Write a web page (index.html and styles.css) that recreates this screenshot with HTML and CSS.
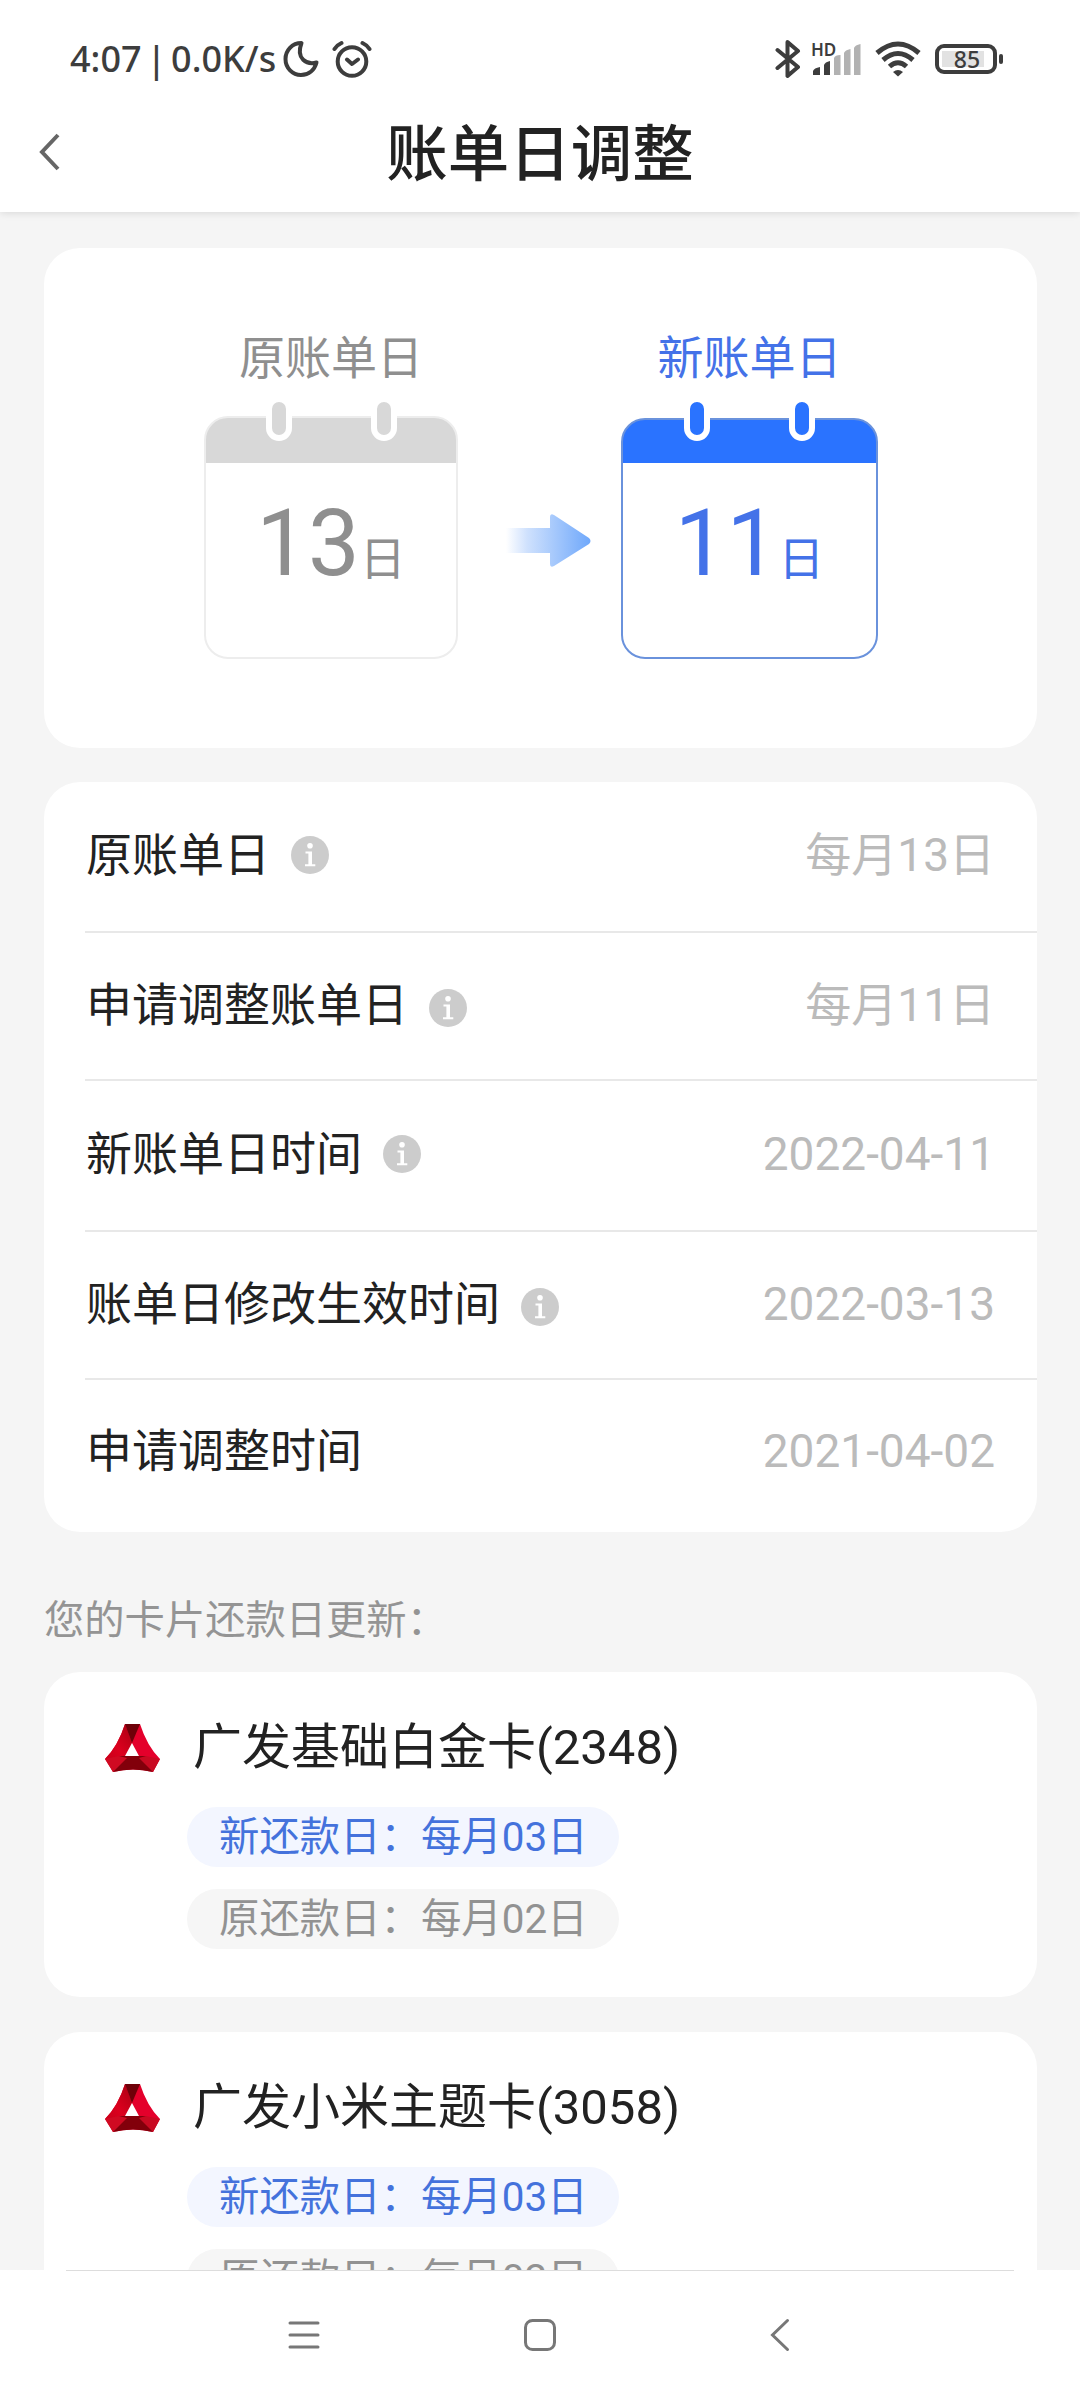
FILE: index.html
```html
<!DOCTYPE html>
<html lang="zh-CN">
<head>
    <meta charset="UTF-8">
    <meta name="viewport" content="width=device-width, initial-scale=1.0">
    <title>账单日调整</title>
    <link rel="stylesheet" href="styles.css">
</head>
<body>

    <svg class="defs" width="0" height="0">
        <defs>
            <linearGradient id="arrowFill" x1="0" x2="1" y1="0" y2="0">
                <stop offset="0" stop-color="#fff"/>
                <stop offset="0.25" stop-color="#cfe1fd"/>
                <stop offset="1" stop-color="#6fa8fb"/>
            </linearGradient>
            <linearGradient id="redLeft" x1="1" x2="0" y1="0" y2="1">
                <stop offset="0" stop-color="#a90012"/>
                <stop offset="0.6" stop-color="#dc001e"/>
                <stop offset="1" stop-color="#c8001a"/>
            </linearGradient>
        </defs>
        <symbol id="info" viewBox="0 0 38 38">
            <circle cx="19" cy="19" r="19" fill="#ccc"/>
            <circle cx="19" cy="9.8" r="2.8" fill="#fff"/>
            <path d="M14.5 15.4H21V28.2H24.3V30.2H14V28.2H17.4V17.4H14.5Z" fill="#fff"/>
        </symbol>
        <symbol id="logo" viewBox="0 0 56 48">
            <path d="M20 0H35Q42 22 55 35L48 48Q28 43 8 48L0 35Q13 22 20 0Z" fill="#e4002b"/>
            <path d="M20 0L27 19L20 32L14 33L0 35Q13 22 20 0Z" fill="url(#redLeft)"/>
            <path d="M20 0H35L27 19Z" fill="#6d0008"/>
            <path d="M14 32H41L48 48Q28 43 8 48Z" fill="#82000b"/>
            <path d="M14 32L22 34L8 48L0 35Z" fill="#d00a22"/>
            <path d="M41 32L34 34L48 48L55 35Z" fill="#c90a22"/>
            <path d="M27 19L34 32H20Z" fill="#fff"/>
        </symbol>
    </svg>

    <div class="status-bar">
        <span class="clock">4:07 | 0.0K/s</span>
        <svg class="moon" width="36" height="38" viewBox="0 0 36 38">
            <path d="M18.5 3C9 3 2.5 10.500 2.500 19C2.500 28 9.500 35 18 35C26 35 31.500 30 33.500 22.500C24 25 12.500 19 18.500 3Z"/>
        </svg>
        <svg class="alarm" width="40" height="38" viewBox="0 0 40 38">
            <circle cx="20" cy="21.500" r="14.300"/>
            <path d="M2.500 9Q5 5 9.500 3M37.500 9Q35 5 30.500 3M15 19.500L20 24L26 19.500"/>
        </svg>
        <div class="status-right">
            <svg class="bluetooth" width="26" height="40" viewBox="0 0 26 40">
                <path d="M2.500 11L23 28L12.500 37V3L23 12L2.500 29"/>
            </svg>
            <div class="signal">
                <svg width="50" height="38" viewBox="0 0 50 38">
                    <path d="M0 35V31Q1 28 7 27V35ZM11 35V25Q12 22 17 21V35Z" fill="#3d3d3d"/>
                    <path d="M21 35V18Q22 15 27.500 15V35ZM31 35V13Q32 10 37.500 9V35ZM41 35V8Q42 5 47.500 4V35Z" fill="#b2b2b2"/>
                </svg>
                <span class="hd">HD</span>
            </div>
            <svg class="wifi" width="48" height="38" viewBox="0 0 48 38">
                <path d="M3 13Q24 -5 45 13M9 20Q24 7 39 20M15.500 26.500Q24 19 32.500 26.500"/>
                <path class="dot" d="M19 32Q24 28 29 32L24 36.500Z"/>
            </svg>
            <div class="battery"><span>85</span></div>
        </div>
    </div>

    <header class="header">
        <svg class="back" width="24" height="42" viewBox="0 0 24 42">
            <path d="M20 4L4 21L20 38"/>
        </svg>
        <h1>账单日调整</h1>
    </header>

    <main class="content">
        <section class="card summary">
            <div class="day old">
                <p class="day-label">原账单日</p>
                <div class="calendar">
                    <i class="ring left"></i><i class="ring right"></i>
                    <p class="date">13<small>日</small></p>
                </div>
            </div>
            <svg class="arrow" width="86" height="56" viewBox="0 0 86 56">
                <path d="M0 15H44V4Q44 0 48 2L83 25Q86 28 83 31L48 53Q44 55 44 51V40H0Z" fill="url(#arrowFill)"/>
            </svg>
            <div class="day new">
                <p class="day-label">新账单日</p>
                <div class="calendar">
                    <i class="ring left"></i><i class="ring right"></i>
                    <p class="date">11<small>日</small></p>
                </div>
            </div>
        </section>

        <section class="card list">
            <div class="row">
                <span>原账单日</span>
                <svg class="info" width="38" height="38"><use href="#info"/></svg>
                <span class="value">每月13日</span>
            </div>
            <div class="row short">
                <span>申请调整账单日</span>
                <svg class="info low" width="38" height="38"><use href="#info"/></svg>
                <span class="value">每月11日</span>
            </div>
            <div class="row">
                <span>新账单日时间</span>
                <svg class="info" width="38" height="38"><use href="#info"/></svg>
                <span class="value">2022-04-11</span>
            </div>
            <div class="row short">
                <span>账单日修改生效时间</span>
                <svg class="info low" width="38" height="38"><use href="#info"/></svg>
                <span class="value">2022-03-13</span>
            </div>
            <div class="row short">
                <span>申请调整时间</span>
                <span class="value">2021-04-02</span>
            </div>
        </section>

        <h2>您的卡片还款日更新：</h2>

        <section class="card bank">
            <div class="bank-title">
                <svg width="56" height="48"><use href="#logo"/></svg>
                <span>广发基础白金卡(2348)</span>
            </div>
            <p class="pill blue">新还款日：每月03日</p>
            <p class="pill">原还款日：每月02日</p>
        </section>

        <section class="card bank">
            <div class="bank-title">
                <svg width="56" height="48"><use href="#logo"/></svg>
                <span>广发小米主题卡(3058)</span>
            </div>
            <p class="pill blue">新还款日：每月03日</p>
            <p class="pill">原还款日：每月02日</p>
        </section>
    </main>

    <nav class="nav-bar">
        <svg width="34" height="34" viewBox="0 0 34 34"><path d="M3 5H31M3 17H31M3 29H31"/></svg>
        <svg width="34" height="34" viewBox="0 0 34 34"><rect x="2.500" y="2.500" width="29" height="29" rx="7"/></svg>
        <svg width="34" height="34" viewBox="0 0 34 34"><path d="M28.500 2.500L13.500 17L28.500 31.500"/></svg>
    </nav>

</body>
</html>
```
FILE: styles.css
```css
* {
    box-sizing: border-box;
}

body {
    font-family: Roboto, 'Noto Sans CJK SC', sans-serif;
    background-color: #f5f5f5;
    color: #222;
    margin: 0;
    height: 2400px;
    display: flex;
    flex-direction: column;
    overflow: hidden;
}

h1, h2, p {
    margin: 0;
    font-weight: 400;
}

svg {
    display: block;
    flex: none;
}

.defs {
    position: absolute;
}

/* Status bar */
.status-bar {
    position: relative;
    z-index: 1;
    flex: none;
    height: 100px;
    padding: 18px 77px 0 70px;
    display: flex;
    align-items: center;
    background-color: #fff;
    color: #3d3d3d;
}

.status-bar svg {
    fill: none;
    stroke: #3d3d3d;
    stroke-width: 4;
    stroke-linecap: round;
    stroke-linejoin: round;
}

.clock {
    width: 213px;
    font: 500 36px/40px 'Noto Sans', sans-serif;
    word-spacing: -4.5px;
    white-space: nowrap;
}

.alarm {
    margin-left: 13px;
}

.status-right {
    display: flex;
    align-items: center;
    margin-left: auto;
}

.signal {
    position: relative;
    margin: 0 11px 0 12px;
}

.status-bar .signal svg {
    stroke: none;
}

.hd {
    position: absolute;
    left: -2px;
    top: 0;
    font: 600 17px/20px 'Noto Sans', sans-serif;
}

.status-bar .wifi {
    stroke-width: 5;
    stroke-linecap: butt;
}

.status-bar .wifi .dot {
    fill: #3d3d3d;
    stroke: none;
}

.battery {
    position: relative;
    width: 62px;
    height: 30px;
    margin: 0 6px 0 13px;
    padding-left: 2px;
    border: 4px solid #3d3d3d;
    border-radius: 9px;
    background: linear-gradient(#e2e2e2, #e2e2e2) 3px 3px / 42px 16px no-repeat;
    font: 500 23px/23px 'Noto Sans', sans-serif;
    text-align: center;
}

.battery::after {
    content: '';
    position: absolute;
    right: -10px;
    top: 6px;
    width: 4px;
    height: 10px;
    border-radius: 2px;
    background-color: #3d3d3d;
}

/* Title bar */
.header {
    flex: none;
    position: relative;
    display: flex;
    align-items: center;
    justify-content: center;
    height: 112px;
    background-color: #fff;
    box-shadow: 0 1px 8px rgba(0, 0, 0, 0.12);
}

.header h1 {
    font-size: 61.5px;
    font-weight: 500;
    line-height: 80px;
    margin-bottom: 2px;
}

.back {
    position: absolute;
    left: 38px;
    top: 31px;
    fill: none;
    stroke: #666;
    stroke-width: 4;
}

/* Content */
.content {
    flex: 1;
    min-height: 0;
    overflow: hidden;
    padding: 36px 43px 0 44px;
}

.card {
    background-color: #fff;
    border-radius: 36px;
}

.summary {
    height: 500px;
    display: flex;
    padding: 80px 0 0 160px;
}

.day {
    width: 254px;
    text-align: center;
    color: #8f8f8f;
}

.day.new {
    width: 257px;
    color: #4472e8;
}

.day-label {
    font-size: 46px;
    line-height: 60px;
}

.calendar {
    position: relative;
    height: 243px;
    margin-top: 28px;
    padding-top: 66px;
    border: 2px solid #ededed;
    border-radius: 24px;
    background: linear-gradient(#d8d8d8, #d8d8d8) 0 0 / 100% 47px no-repeat border-box;
}

.new .calendar {
    margin-top: 30px;
    height: 241px;
    padding-top: 64px;
    border-color: #6a92dc;
    background: linear-gradient(#2a73ff, #2a73ff) 0 0 / 100% 45px no-repeat border-box;
}

.ring {
    position: absolute;
    top: -22px;
    width: 26px;
    height: 45px;
    border: 6px solid #fff;
    border-radius: 13px;
    background-color: #d8d8d8;
}

.new .ring {
    top: -24px;
    background-color: #2a73ff;
}

.ring.left {
    left: 60px;
}

.ring.right {
    left: 165px;
}

.new .ring.left {
    left: 61px;
}

.new .ring.right {
    left: 166px;
}

.date {
    font-size: 92px;
    line-height: 120px;
}

.date small {
    font-size: 46px;
}

.arrow {
    margin: 185px 29px 0 48px;
}

/* Detail list */
.list {
    height: 750px;
    margin-top: 34px;
    padding-left: 41px;
}

.row {
    display: flex;
    align-items: center;
    height: 151px;
    padding: 0 42px 3px 1px;
    border-bottom: 2px solid #e8e8e8;
    font-size: 46px;
    line-height: 60px;
}

.row.short {
    height: 148px;
}

.row:last-child {
    padding-bottom: 7px;
    border-bottom: none;
}

.info {
    margin-left: 21px;
}

.info.low {
    margin-top: 6px;
}

.value {
    margin-left: auto;
    color: #bbb;
}

.content h2 {
    height: 140px;
    font-size: 40.3px;
    line-height: 177px;
    color: #949494;
}

/* Bank cards */
.bank {
    height: 325px;
    padding: 41px 0 0 61px;
    margin-bottom: 35px;
}

.bank-title {
    display: flex;
    align-items: center;
    height: 58px;
    margin-bottom: 36px;
    font-size: 49px;
}

.bank-title svg {
    margin: 11px 32px 0 0;
}

.pill {
    width: 432px;
    height: 60px;
    margin: 0 0 22px 82px;
    padding-left: 32px;
    border-radius: 30px;
    background-color: #f6f6f6;
    color: #929292;
    font-size: 40.4px;
    line-height: 62px;
    white-space: nowrap;
}

.pill.blue {
    background-color: #f3f6ff;
    color: #4472dc;
}

/* System navigation */
.nav-bar {
    flex: none;
    position: relative;
    display: flex;
    height: 130px;
    padding: 48px 0 0 287px;
    gap: 202px;
    background-color: #fff;
}

.nav-bar::before {
    content: '';
    position: absolute;
    top: 0;
    left: 66px;
    width: 948px;
    height: 1px;
    background-color: #ddd;
}

.nav-bar svg {
    fill: none;
    stroke: #777;
    stroke-width: 3;
    stroke-linecap: round;
}
```
